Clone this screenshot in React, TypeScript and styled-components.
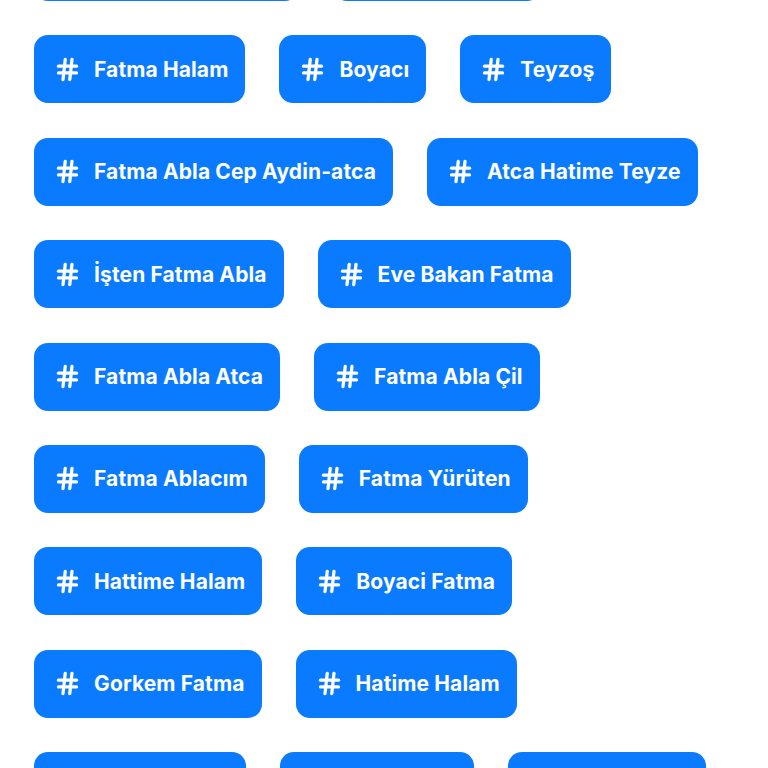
import styled, { createGlobalStyle } from "styled-components";
import { Hash } from "lucide-react";

const GlobalStyle = createGlobalStyle`
  html, body {
    margin: 0;
    padding: 0;
    background: #ffffff;
    overflow: hidden;
  }
`;

const Page = styled.div`
  height: 768px;
  overflow: hidden;
`;

const TagList = styled.div`
  display: flex;
  flex-wrap: wrap;
  column-gap: 34px;
  row-gap: 34.4px;
  padding: 0 34px;
  margin-top: -67px;
`;

const Tag = styled.div`
  display: flex;
  align-items: center;
  gap: 13px;
  height: 68px;
  box-sizing: border-box;
  padding: 0 17px 0 20px;
  border-radius: 14px;
  background: #0a7aff;
  color: #ffffff;
  font-family: Inter, "Noto Sans", sans-serif;
  font-weight: 700;
  font-size: 21px;
  letter-spacing: 0.12px;
  white-space: nowrap;
`;

const TagIcon = styled(Hash)`
  flex-shrink: 0;
`;

const tags = [
  "Fatma Abla Sultan",
  "Fatma Teyze",
  "Fatma Halam",
  "Boyacı",
  "Teyzoş",
  "Fatma Abla Cep Aydin-atca",
  "Atca Hatime Teyze",
  "İşten Fatma Abla",
  "Eve Bakan Fatma",
  "Fatma Abla Atca",
  "Fatma Abla Çil",
  "Fatma Ablacım",
  "Fatma Yürüten",
  "Hattime Halam",
  "Boyaci Fatma",
  "Gorkem Fatma",
  "Hatime Halam",
  "Fatma Hanım",
  "Fatma Atca",
  "Fatma Ayşe",
];

export default function App() {
  return (
    <Page>
      <GlobalStyle />
      <TagList>
        {tags.map((t) => (
          <Tag key={t}>
            <TagIcon size={27} strokeWidth={2.9} />
            {t}
          </Tag>
        ))}
      </TagList>
    </Page>
  );
}
